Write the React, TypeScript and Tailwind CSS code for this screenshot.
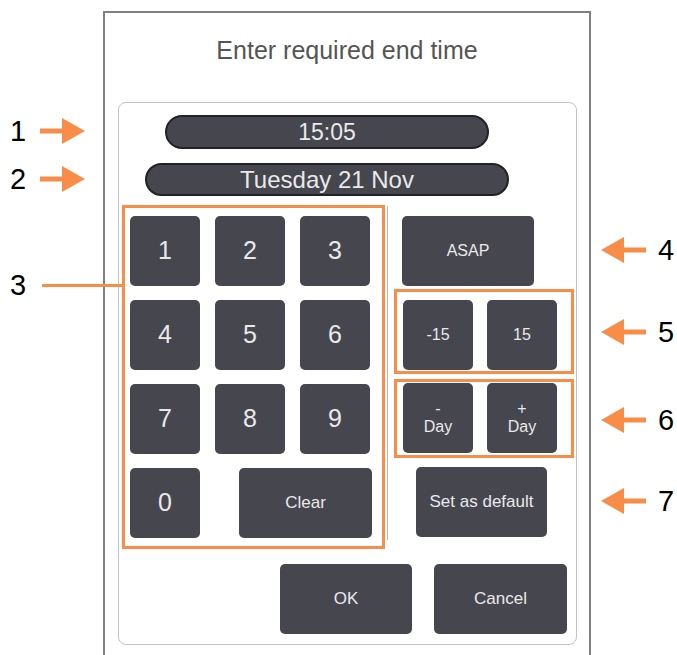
import type { ReactNode } from "react";

const KEY = "flex items-center justify-center rounded-[5px] bg-[#46464f] text-[#e9e9e9]";

const Key = ({ children, className = "" }: { children: ReactNode; className?: string }) => (
  <div className={`${KEY} h-[70px] shrink-0 ${className}`}>{children}</div>
);

// orange callout arrows, drawn
const ArrowRight = () => (
  <svg width="46" height="28" viewBox="0 0 46 28">
    <rect x="0" y="11.5" width="24" height="5" fill="#f78d48" />
    <polygon points="22,1 45,14 22,27" fill="#f78d48" />
  </svg>
);

const ArrowLeft = () => (
  <svg width="46" height="28" viewBox="0 0 46 28">
    <rect x="22" y="11.5" width="24" height="5" fill="#f78d48" />
    <polygon points="24,1 1,14 24,27" fill="#f78d48" />
  </svg>
);

export default function App() {
  return (
    <div
      className="relative w-[677px] h-[655px] overflow-hidden bg-white"
      style={{ fontFamily: '"Liberation Sans", Arial, sans-serif' }}
    >
      {/* dialog */}
      <div className="ml-[103px] mt-[11px] w-[488px] h-[660px] border-2 border-b-0 border-[#808080]">
        <div className="pt-[22px] text-center text-[25px] leading-[30px] text-[#555]">
          Enter required end time
        </div>

        <div className="ml-[13px] mt-[37px] w-[459px] border border-[#c4c4c4] rounded-lg pb-[10px]">
          {/* time + date */}
          <div className="ml-[46px] mt-[12px] w-[324px] h-[34px] rounded-full border-2 border-[#222] bg-[#46464f] flex items-center justify-center text-[23px] text-[#e9e9e9]">
            15:05
          </div>
          <div className="ml-[26px] mt-[14px] w-[364px] h-[33px] rounded-full border-2 border-[#222] bg-[#46464f] flex items-center justify-center text-[24px] text-[#e9e9e9]">
            Tuesday 21 Nov
          </div>

          <div className="mt-[20px] flex items-start">
            {/* keypad */}
            <div className="relative ml-[11px] w-[240px] flex flex-col gap-[14px]">
              <div className="grid grid-cols-3 gap-x-[15px] gap-y-[14px] text-[25px]">
                {["1", "2", "3", "4", "5", "6", "7", "8", "9"].map((d) => (
                  <Key key={d}>{d}</Key>
                ))}
              </div>
              <div className="flex">
                <Key className="w-[70px] text-[25px]">0</Key>
                <Key className="ml-[39px] w-[133px] text-[17px]">Clear</Key>
              </div>
              <div className="absolute left-[-8px] top-[-11px] right-[-15px] bottom-[-11px] border-[3px] border-[#f78d48]" />
            </div>

            <div className="ml-[17px] -mt-[10px] w-px h-[334px] bg-[#b8b8b8]" />

            {/* right column */}
            <div className="ml-[14px] flex flex-col gap-[14px] text-[17px]">
              <Key className="w-[132px] text-[16px]">ASAP</Key>
              <div className="relative ml-[1px] flex gap-[14px]">
                <Key className="w-[70px] text-[16px]">-15</Key>
                <Key className="w-[70px] text-[16px]">15</Key>
                <div className="absolute left-[-9px] top-[-11px] right-[-17px] bottom-[-4px] border-[3px] border-[#f78d48]" />
              </div>
              <div className="relative ml-[1px] -mt-[1px] flex gap-[14px]">
                <Key className="w-[70px] flex-col text-[16px] leading-[18px]">
                  <span>-</span>
                  <span>Day</span>
                </Key>
                <Key className="w-[70px] flex-col text-[16px] leading-[18px]">
                  <span>+</span>
                  <span>Day</span>
                </Key>
                <div className="absolute left-[-9px] top-[-4px] right-[-17px] bottom-[-5px] border-[3px] border-[#f78d48]" />
              </div>
              <Key className="ml-[14px] w-[131px]">Set as default</Key>
            </div>
          </div>

          {/* ok / cancel */}
          <div className="mt-[24px] flex text-[17px]">
            <Key className="ml-[161px] w-[132px]">OK</Key>
            <Key className="ml-[22px] w-[133px]">Cancel</Key>
          </div>
        </div>
      </div>

      {/* callouts */}
      <div className="absolute left-[10px] top-[114px] flex items-center text-[29px] leading-[34px] text-black">
        <span className="w-[30px]">1</span>
        <ArrowRight />
      </div>
      <div className="absolute left-[10px] top-[162px] flex items-center text-[29px] leading-[34px] text-black">
        <span className="w-[30px]">2</span>
        <ArrowRight />
      </div>
      <div className="absolute left-[10px] top-[268px] flex items-center text-[29px] leading-[34px] text-black">
        <span className="w-[32px]">3</span>
        <div className="w-[81px] h-[3px] bg-[#f78d48]" />
      </div>
      {[
        { n: "4", top: "top-[233px]" },
        { n: "5", top: "top-[315px]" },
        { n: "6", top: "top-[403px]" },
        { n: "7", top: "top-[484px]" },
      ].map((c) => (
        <div key={c.n} className={`absolute left-[600px] ${c.top} flex items-center text-[29px] leading-[34px] text-black`}>
          <ArrowLeft />
          <span className="ml-[12px]">{c.n}</span>
        </div>
      ))}
    </div>
  );
}
